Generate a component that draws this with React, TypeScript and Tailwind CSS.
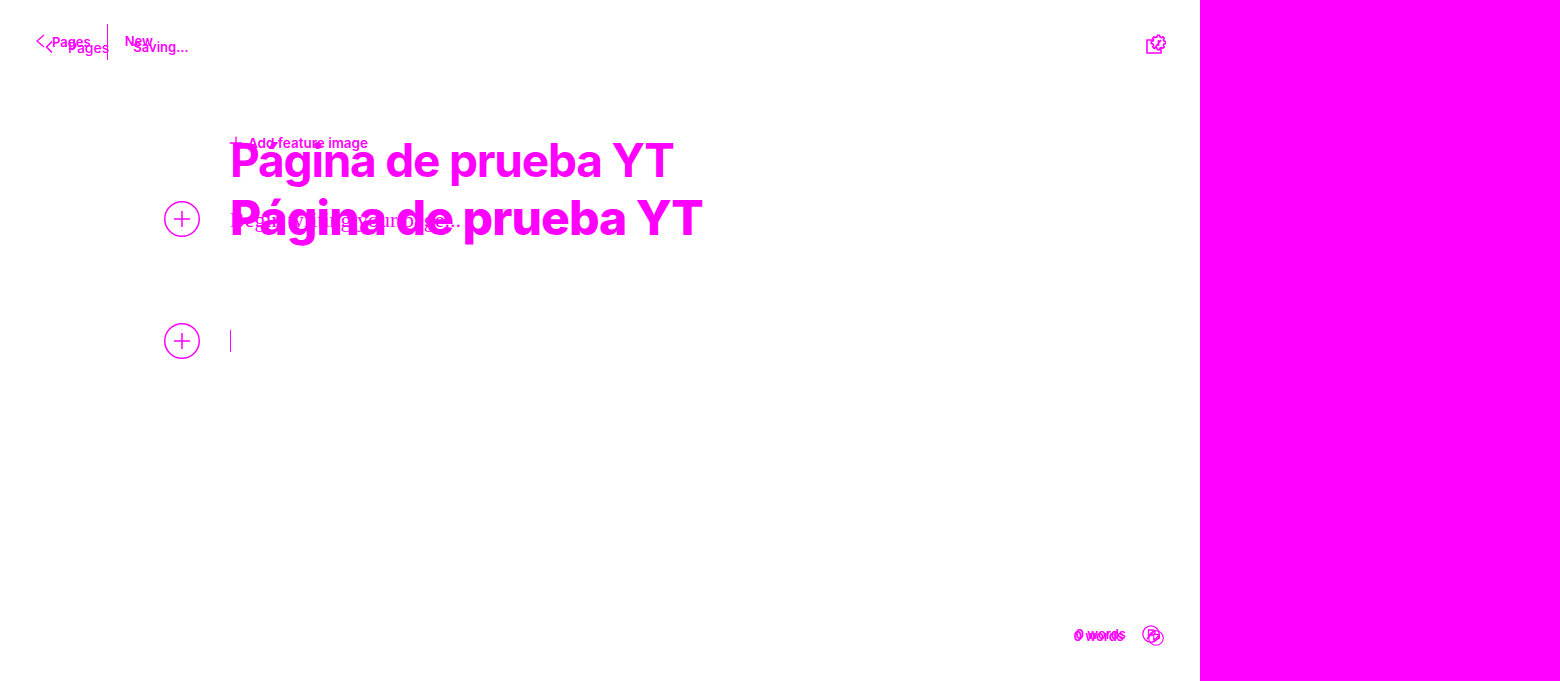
import { ChevronLeft, Plus } from 'lucide-react';

const inter = 'font-["Inter",sans-serif]';

function CirclePlus() {
  return (
    <svg className="w-9 h-9 shrink-0" viewBox="0 0 36 36" fill="none" stroke="currentColor" strokeWidth={1.5}>
      <circle cx="18" cy="18" r="17.25" />
      <path d="M10 18h16M18 10v16" />
    </svg>
  );
}

function WordCount({ size }: { size: string }) {
  return (
    <svg className={size} viewBox="0 0 18 18" fill="none" stroke="currentColor" strokeWidth={1.3}>
      <circle cx="9" cy="9" r="8.2" />
      <path d="M6.5 13.5V5h4a2.5 2.5 0 0 1 0 5h-4M5 14 13 5" />
    </svg>
  );
}

function Settings() {
  return (
    <svg className="w-5 h-5" viewBox="0 0 20 20" fill="none" stroke="currentColor" strokeWidth={1.6}>
      <path d="M7 6H1v13h14v-6" />
      <path d="M11.5 1.2h2l.4 1.7 1.5.7 1.5-.9 1.4 1.4-.9 1.5.6 1.5 1.7.4v2l-1.7.4-.6 1.5.9 1.5-1.4 1.4-1.5-.9-1.5.6-.4 1.7h-2l-.4-1.7-1.5-.6-1.5.9-1.4-1.4.9-1.5-.6-1.5-1.7-.4v-2l1.7-.4.6-1.5-.9-1.5 1.4-1.4 1.5.9 1.5-.7z" />
      <path d="M12.5 6v6M8 15l7-9" />
    </svg>
  );
}

export default function App() {
  return (
    <div className={`flex w-[1560px] h-[681px] bg-white text-[#ff00ff] overflow-hidden ${inter}`}>
      <main className="relative w-[1200px] h-full">
        {/* first editor layer: big title */}
        <div className="flex flex-col h-full">
          <header className="flex items-center h-9 mt-6 pl-[36px] text-[13px] font-semibold">
            <svg className="w-[9px] h-[14px] mr-[7px] -mt-[2px]" viewBox="0 0 9 14" fill="none" stroke="currentColor" strokeWidth={1.3}>
              <path d="M8 1 1 7l7 6" />
            </svg>
            <span className="mt-[2px]">Pages</span>
            <div className="w-px h-9 bg-[#ff00ff] ml-[16px]" />
            <span className="ml-[17px]">New</span>
          </header>
          <section className="flex items-center mt-[129px] pl-[230px]">
            <h1 className="text-[48px] leading-[58px] font-extrabold tracking-[-0.95px]">Página de prueba YT</h1>
          </section>
          <div className="flex items-center mt-[76px] pl-[164px]">
            <CirclePlus />
            <div className="w-px h-[22px] bg-[#ff00ff] ml-[30px]" />
          </div>
          <footer className="mt-auto mb-[31px] flex items-center justify-end gap-6 pr-[36px] text-[13px] font-semibold">
            <span className="mb-1">0 words</span>
            <WordCount size="w-4 h-4" />
          </footer>
        </div>

        {/* second layer sits on top, a few pixels off */}
        <div className="absolute inset-0 flex flex-col">
          <header className="flex items-center h-5 mt-[37px] pl-[39px] text-[14px] font-medium">
            <ChevronLeft className="w-5 h-5 mr-[9px]" strokeWidth={2} />
            <span>Pages</span>
            <span className="ml-[24px] mt-[2px] text-[13px] font-semibold">Saving...</span>
            <div className="ml-auto mr-[34px] -mt-[6px]">
              <Settings />
            </div>
          </header>
          <button className="flex items-center gap-[2px] ml-[226px] mt-[76px] text-[13.5px] font-semibold h-5">
            <Plus className="w-5 h-5" strokeWidth={1.6} />
            <span>Add feature image</span>
          </button>
          <h2 className="ml-[230px] text-[46px] leading-[44px] font-bold tracking-[-1.2px] mt-[-15px]">Página de prueba YT</h2>
          <div className="flex items-center mt-[19px] pl-[164px]">
            <CirclePlus />
            <p className='ml-[30px] font-["Liberation_Serif",serif] text-[22px]'>Begin writing your page...</p>
          </div>
          <footer className="mt-auto mb-[37px] flex items-center justify-end gap-4 pr-[40px] text-[13px] font-semibold">
            <span>0 words</span>
            <WordCount size="w-[18px] h-[18px]" />
          </footer>
        </div>
      </main>
      <aside className="w-[360px] h-full bg-[#ff00ff]" />
    </div>
  );
}
